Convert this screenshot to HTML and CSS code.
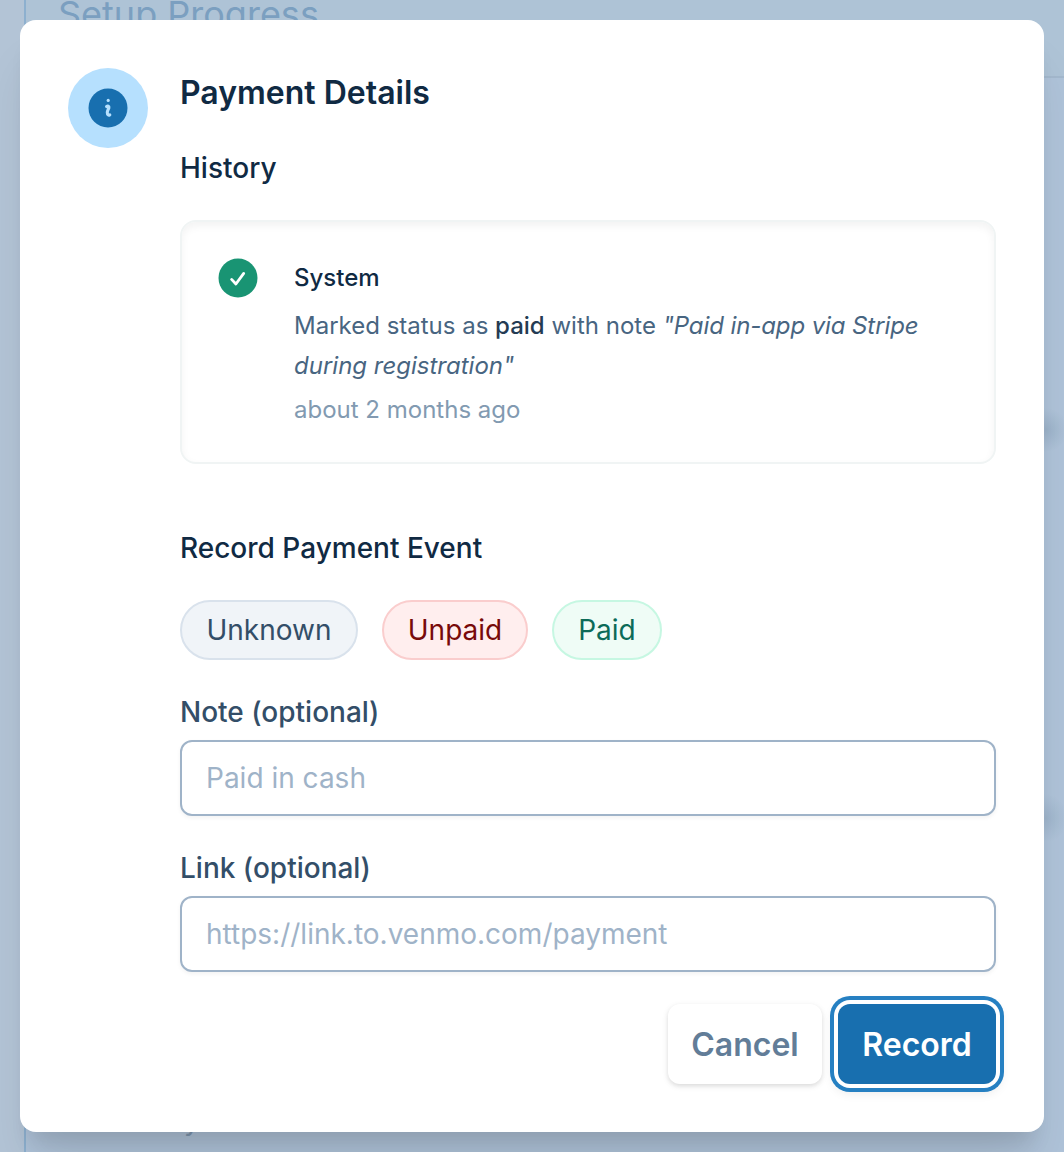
FILE: index.html
```html
<!DOCTYPE html>
<html lang="en">
<head>
<meta charset="utf-8">
<title>Payment Details</title>
<link rel="stylesheet" href="styles.css">
</head>
<body>
<div class="backdrop">
  <div class="panel">
    <div class="panel-head">Setup Progress</div>
    <div class="panel-foot">y</div>
  </div>
</div>
<main class="modal" role="dialog" aria-labelledby="title">
  <div class="badge">
    <svg width="48" height="48" viewBox="0 0 48 48" aria-hidden="true">
      <circle cx="24" cy="24" r="19.5" fill="#186faf"/>
      <circle cx="24.2" cy="16.4" r="1.6" fill="#b6e0fe"/>
      <path d="M22.6 22.6c1.2-.9 2.6-.4 2.3 1-.3 1.5-1.6 3.1-1.6 5 0 2.3 1.3 2.9 2.5 2.2" fill="none" stroke="#b6e0fe" stroke-width="3.1" stroke-linecap="round" stroke-linejoin="round"/>
    </svg>
  </div>
  <div class="content">
    <h2 class="title" id="title"><span>Payment Details</span></h2>
    <h3 class="subtitle"><span>History</span></h3>
    <section class="history">
      <svg class="check" width="40" height="40" viewBox="0 0 40 40" aria-hidden="true">
        <circle cx="20" cy="20" r="19.5" fill="#199473"/>
        <path d="M13.6 21.4l4.3 4.6 7.8-10.6" fill="none" stroke="#fff" stroke-width="2.8" stroke-linecap="round" stroke-linejoin="round"/>
      </svg>
      <div class="event">
        <div class="author"><span>System</span></div>
        <p class="message">Marked status as <strong>paid</strong> with note <em><span class="tight">"Paid in-app via Stripe</span><br>during registration"</em></p>
        <div class="time"><span>about 2 months ago</span></div>
      </div>
    </section>
    <h3 class="subtitle record-title"><span>Record Payment Event</span></h3>
    <div class="pills">
      <button class="pill unknown">Unknown</button>
      <button class="pill unpaid">Unpaid</button>
      <button class="pill paid">Paid</button>
    </div>
    <label class="label" for="note"><span>Note (optional)</span></label>
    <input class="input" id="note" placeholder="Paid in cash">
    <label class="label second" for="link"><span>Link (optional)</span></label>
    <input class="input" id="link" placeholder="https://link.to.venmo.com/payment">
    <div class="actions">
      <button class="btn cancel">Cancel</button>
      <button class="btn record">Record</button>
    </div>
  </div>
</main>
</body>
</html>
```
FILE: styles.css
```css
* { box-sizing: border-box; }
body {
  margin: 0;
  padding: 20px;
  height: 1152px;
  overflow: hidden;
  background: #b3c4d6;
  font-family: Inter, "Liberation Sans", sans-serif;
  -webkit-font-smoothing: antialiased;
}
h2, h3, p { margin: 0; }
button, input { font-family: inherit; margin: 0; }

.backdrop { position: absolute; inset: 0; overflow: hidden; }
.panel {
  display: flex;
  flex-direction: column;
  justify-content: space-between;
  height: 100%;
  margin-left: 24px;
  border-left: 2px solid #8db0cf;
  background:
    radial-gradient(ellipse 22px 22px at 1020px 430px, rgba(110,140,165,.3), transparent),
    radial-gradient(ellipse 22px 24px at 1020px 818px, rgba(110,140,165,.25), transparent),
    #afc3d9;
}
.panel-head {
  height: 78px;
  padding-left: 32px;
  border-bottom: 2px solid #a3b8cd;
  background: #aec3d6;
  color: #7b9fc0;
  font-size: 36px;
  line-height: 28px;
}
.panel-foot {
  padding: 0 0 15px 158px;
  color: #8097b0;
  font-size: 28px;
  line-height: 34px;
}

.modal {
  position: relative;
  display: flex;
  gap: 32px;
  height: 1112px;
  padding: 48px;
  border-radius: 16px;
  background: #fff;
  box-shadow: 0 40px 50px -10px rgba(0,0,0,.1), 0 20px 20px -10px rgba(0,0,0,.1);
}
.badge {
  display: flex;
  flex: none;
  align-items: center;
  justify-content: center;
  width: 80px;
  height: 80px;
  border-radius: 50%;
  background: #b6e0fe;
}
.content { flex: 1; min-width: 0; }
.title { padding-top: 1px; height: 48px; color: #102a43; font-size: 32px; font-weight: 600; line-height: 48px; }
.subtitle { margin-top: 32px; color: #102a43; font-size: 28px; font-weight: 500; line-height: 40px; }

.history {
  display: flex;
  gap: 36px;
  height: 244px;
  margin-top: 32px;
  padding: 36px;
  border: 2px solid #f0f4f4;
  border-radius: 16px;
  box-shadow: inset 0 4px 8px rgba(0,0,0,.05);
}
.check { flex: none; }
.author { color: #102a43; font-size: 24px; font-weight: 500; line-height: 40px; }
.message { margin-top: 8px; color: #486581; font-size: 24px; line-height: 40px; white-space: nowrap; }
.message strong { color: #243b53; font-weight: 550; }
.tight { letter-spacing: -.1px; }
.time { margin-top: 4px; color: #829ab1; font-size: 24px; line-height: 40px; }

.record-title { margin-top: 64px; }
.pills { display: flex; gap: 24px; margin-top: 32px; }
.pill {
  height: 60px;
  padding: 0;
  border: 2px solid;
  border-radius: 30px;
  font-size: 28px;
  line-height: 40px;
}
.unknown { width: 178px; border-color: #d9e2ec; background: #f0f4f8; color: #334e68; }
.unpaid { width: 146px; border-color: #facdcd; background: #ffeeee; color: #780a0a; }
.paid { width: 110px; border-color: #c6f7e2; background: #effcf6; color: #0c6b58; }

.label { display: block; margin-top: 32px; color: #334e68; font-size: 28px; font-weight: 500; line-height: 40px; }
.input {
  display: block;
  width: 100%;
  height: 76px;
  margin-top: 8px;
  padding: 0 24px;
  border: 2px solid #9fb3c8;
  border-radius: 12px;
  outline: none;
  background: #fff;
  box-shadow: 0 2px 4px rgba(0,0,0,.05);
  font-size: 28px;
}
.input::placeholder { color: #9fb3c8; opacity: 1; }
.actions { display: flex; justify-content: flex-end; gap: 16px; margin-top: 32px; }
.btn { height: 80px; border: 0; border-radius: 12px; padding: 0; font-size: 32px; font-weight: 600; }
.cancel { width: 154px; background: #fff; color: #627d98; box-shadow: 0 2px 6px rgba(0,0,0,.1), 0 2px 4px rgba(0,0,0,.06); }
.record {
  width: 158px;
  background: #186faf;
  color: #fff;
  box-shadow: 0 0 0 4px #fff, 0 0 0 8px #2680c2, 0 4px 12px 4px rgba(0,0,0,.1);
}
```
